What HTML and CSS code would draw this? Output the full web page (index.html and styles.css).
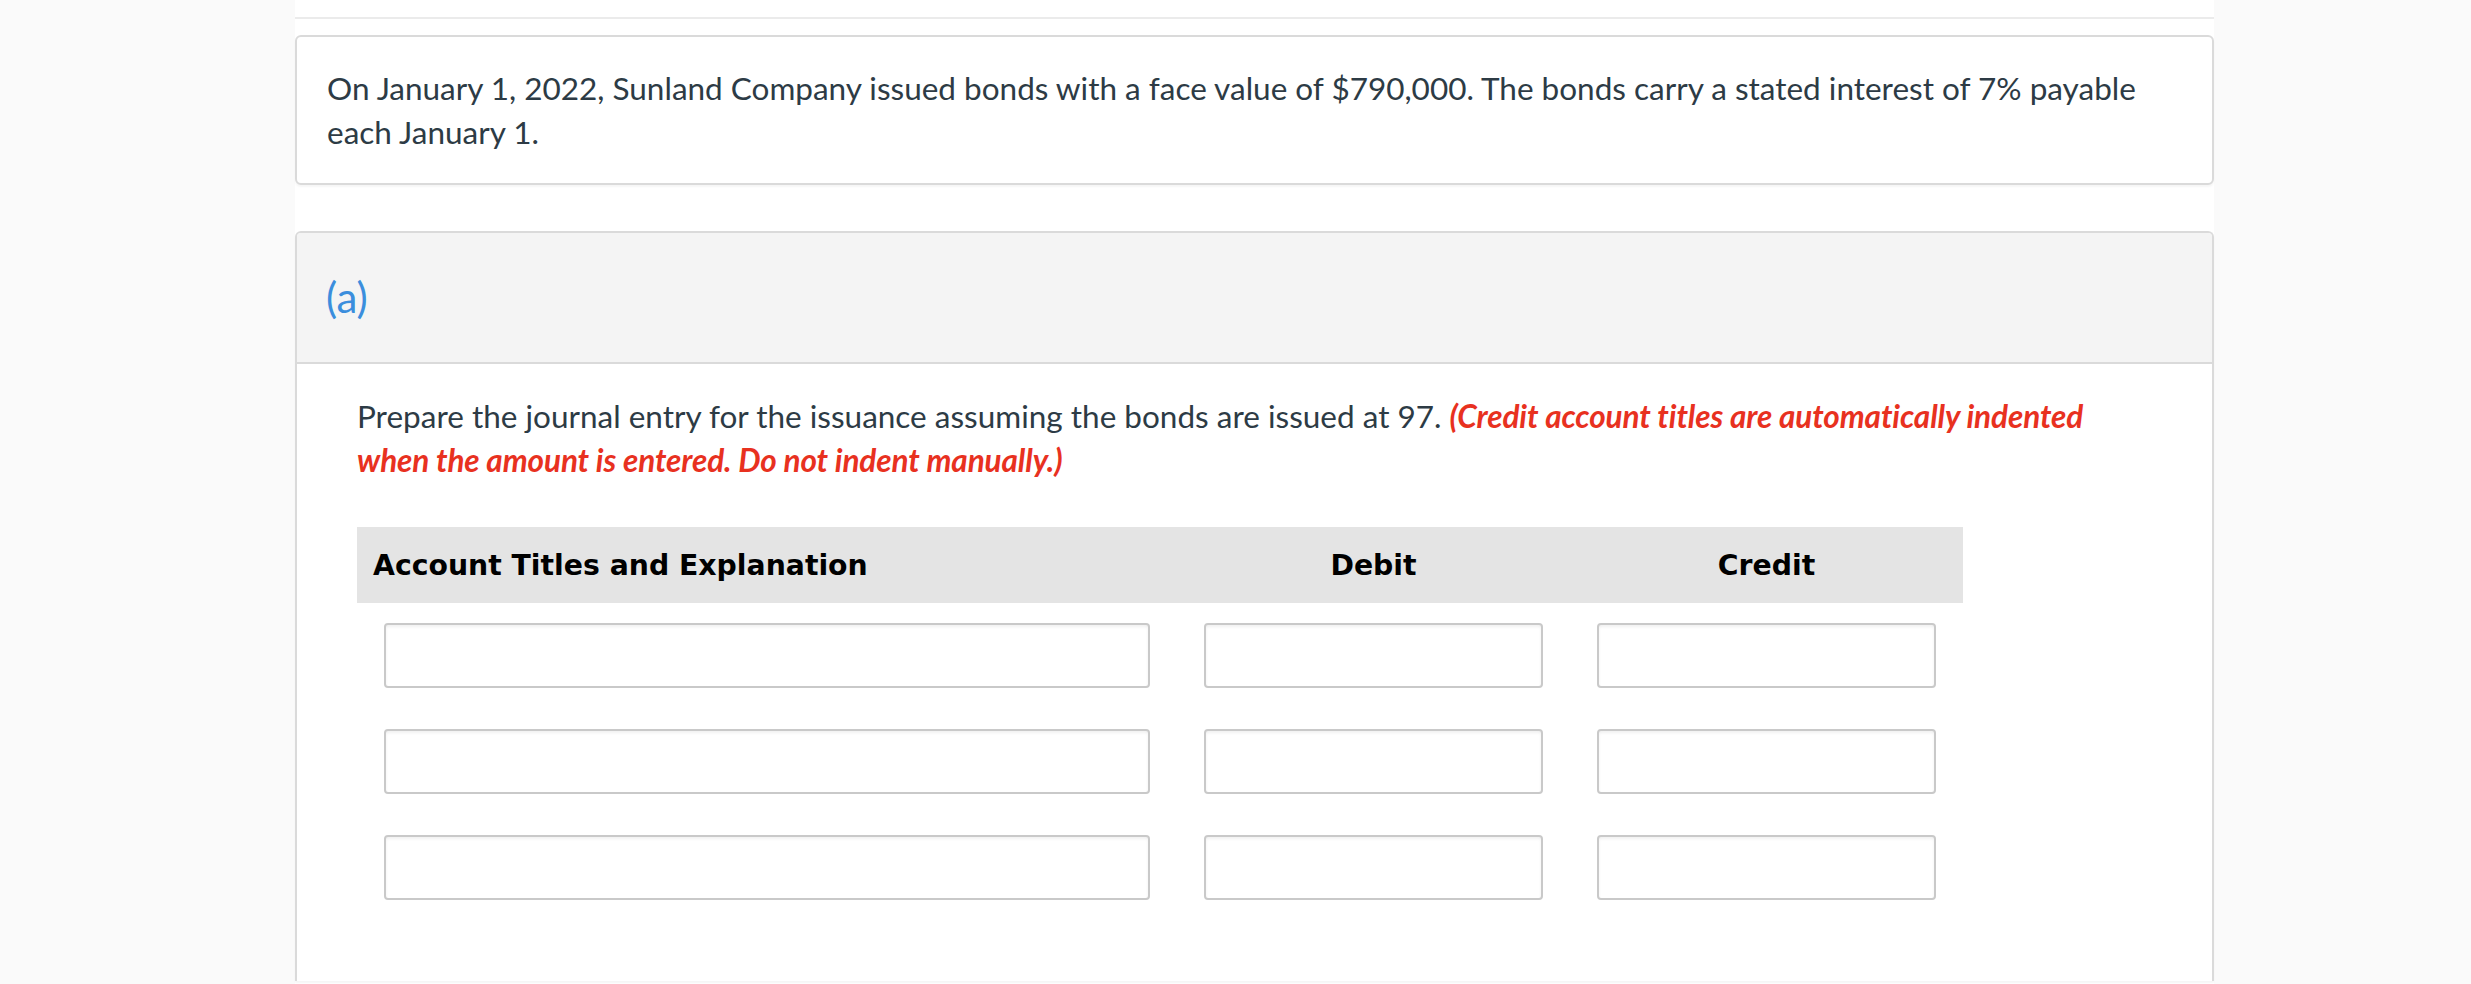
FILE: index.html
```html
<!DOCTYPE html>
<html lang="en">
  <head>
    <meta charset="UTF-8" />
    <meta name="viewport" content="width=device-width, initial-scale=1.0" />
    <title>Bonds Issuance</title>
    <link rel="stylesheet" href="styles.css">
  </head>
  <body>
    <div class="page">
      <div class="top-rule"></div>

      <!-- Enunciado -->
      <div class="card intro">
        <p>On January 1, 2022, Sunland Company issued bonds with a face value of $790,000. The bonds carry a stated interest of 7% payable each January 1.</p>
      </div>

      <!-- Parte (a) -->
      <div class="card part">
        <div class="part-header">(a)</div>
        <div class="part-body">
          <p class="question">
            Prepare the journal entry for the issuance assuming the bonds are issued at 97.
            <em class="note">(Credit account titles are automatically indented when the amount is entered. Do not indent manually.)</em>
          </p>

          <table class="journal">
            <colgroup>
              <col class="col-account" />
              <col class="col-amount" />
              <col class="col-amount" />
            </colgroup>
            <thead>
              <tr>
                <th>Account Titles and Explanation</th>
                <th class="center">Debit</th>
                <th class="center">Credit</th>
              </tr>
            </thead>
            <tbody>
              <tr>
                <td><input type="text" class="field" /></td>
                <td><input type="text" class="field" /></td>
                <td><input type="text" class="field" /></td>
              </tr>
              <tr>
                <td><input type="text" class="field" /></td>
                <td><input type="text" class="field" /></td>
                <td><input type="text" class="field" /></td>
              </tr>
              <tr>
                <td><input type="text" class="field" /></td>
                <td><input type="text" class="field" /></td>
                <td><input type="text" class="field" /></td>
              </tr>
            </tbody>
          </table>
        </div>
      </div>
    </div>
  </body>
</html>
```

FILE: styles.css
```css
body {
  font-family: Lato, "Open Sans", Arial, sans-serif;
  background-color: #fafafa;
  color: #2d3b45;
  margin: 0;
  padding: 0;
}

.page {
  width: 1919px;
  min-height: 100vh;
  margin-left: 295px;
  background-color: #fff;
}

.top-rule {
  height: 17px;
  border-bottom: 2px solid #ebebeb;
}

.card {
  border: 2px solid #dadada;
  border-radius: 6px;
  box-shadow: 0 2px 2px rgba(0, 0, 0, 0.04);
  background-color: #fff;
}

.intro {
  margin-top: 16px;
  padding: 29px 30px;
}

.intro p,
.question {
  margin: 0;
  font-size: 31.5px;
  line-height: 44px;
}

.part {
  margin-top: 46px;
  border-bottom: none;
  border-radius: 6px 6px 0 0;
}

.part-header {
  background-color: #f4f4f4;
  border-bottom: 2px solid #dadada;
  border-radius: 4px 4px 0 0;
  padding: 40px 29px;
  font-size: 42px;
  line-height: 49px;
  color: #3b8edd;
}

.part-body {
  padding: 30px 60px 60px;
}

.note {
  color: #e8311f;
  font-weight: bold;
  letter-spacing: -0.1px;
}

table.journal {
  width: 1606px;
  border-collapse: collapse;
  margin-top: 45px;
  table-layout: fixed;
}

table.journal .col-account {
  width: 820px;
}

table.journal .col-amount {
  width: 393px;
}

table.journal th {
  height: 76px;
  padding: 0 16px;
  background-color: #e4e4e4;
  font-family: "DejaVu Sans", Verdana, sans-serif;
  font-size: 28.3px;
  font-weight: bold;
  color: #000;
  text-align: left;
}

table.journal th.center {
  text-align: center;
}

table.journal td {
  padding: 20px 27px 21px;
}

.field {
  display: block;
  width: 100%;
  height: 65px;
  box-sizing: border-box;
  border: 2px solid #c9c9c9;
  border-radius: 4px;
  box-shadow: inset 0 2px 3px rgba(0, 0, 0, 0.06);
  background-color: #fff;
  margin: 0;
}
```
